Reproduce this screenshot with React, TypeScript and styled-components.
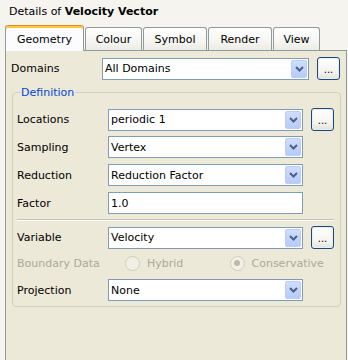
import React from "react";
import styled, { createGlobalStyle } from "styled-components";

const Global = createGlobalStyle`
  html, body { margin: 0; padding: 0; background: #f5f4ef; }
  body {
    font-family: "DejaVu Sans", Verdana, sans-serif;
    font-size: 11px;
    color: #000;
  }
`;

const Window = styled.div`
  width: 348px;
  height: 360px;
  overflow: hidden;
  display: flex;
  flex-direction: column;
  background: #f5f4ef;
`;

const Title = styled.div`
  height: 25px;
  box-sizing: border-box;
  padding: 5px 0 0 9px;
  line-height: 14px;
  white-space: nowrap;
  b { font-weight: bold; }
`;

const TabBar = styled.div`
  display: flex;
  align-items: flex-end;
  height: 25px;
  padding-left: 5px;
  gap: 1px;
`;

const Tab = styled.div<{ $active?: boolean; $w: number }>`
  box-sizing: border-box;
  width: ${(p) => p.$w}px;
  height: ${(p) => (p.$active ? 26 : 23)}px;
  display: flex;
  align-items: center;
  justify-content: center;
  border: 1px solid #919b9c;
  border-bottom: none;
  border-radius: 3px 3px 0 0;
  background: ${(p) =>
    p.$active ? "#fcfcfe" : "linear-gradient(#ffffff, #f3f3ef 70%, #ecebe5)"};
  ${(p) =>
    p.$active
      ? `border-top: 1px solid #e68b2c; box-shadow: inset 0 2px 0 #ffc73c; padding-top: 2px; position: relative; z-index: 1; margin-bottom: -1px;`
      : ``}
`;

const Panel = styled.div`
  margin-left: 5px;
  width: 342px;
  flex: 1;
  box-sizing: border-box;
  border: 1px solid #919b9c;
  border-bottom: none;
  background: #ece9d8;
  padding: 6px 0 0 5px;
  display: flex;
  flex-direction: column;
`;

const Row = styled.div<{ $field: number; $mt?: number }>`
  display: grid;
  grid-template-columns: 83px ${(p) => p.$field}px 23px;
  column-gap: 8px;
  align-items: center;
  height: 22px;
  margin-top: ${(p) => p.$mt ?? 0}px;
`;

const Label = styled.span<{ $disabled?: boolean }>`
  color: ${(p) => (p.$disabled ? "#aca899" : "#000")};
  white-space: nowrap;
`;

const Combo = styled.div`
  box-sizing: border-box;
  height: 22px;
  border: 1px solid #7f9db9;
  background: #fff;
  display: flex;
  align-items: center;
  padding-left: 2px;
  white-space: nowrap;
`;

const ComboText = styled.span`
  flex: 1;
`;

const ArrowBtn = styled.div`
  box-sizing: border-box;
  width: 16px;
  height: 18px;
  margin-right: 1px;
  border: 1px solid #bccdf6;
  border-radius: 2px;
  background: linear-gradient(#cfdcfd, #b7cbf8);
  display: flex;
  align-items: center;
  justify-content: center;
`;

const TextInput = styled.div`
  box-sizing: border-box;
  height: 22px;
  border: 1px solid #7f9db9;
  background: #fff;
  display: flex;
  align-items: center;
  padding-left: 2px;
`;

const DotsButton = styled.div`
  box-sizing: border-box;
  width: 23px;
  height: 23px;
  border: 1px solid #1c4a78;
  border-radius: 3px;
  background: linear-gradient(#ffffff, #f4f3ee 70%, #e3e1d6);
  box-shadow: inset 0 0 0 1px #e6eefc;
  display: flex;
  align-items: flex-end;
  justify-content: center;
  padding-bottom: 4px;
  font-size: 10px;
  line-height: 10px;
`;

const Group = styled.div`
  position: relative;
  margin: 13px 5px 0 1px;
  border: 1px solid #d0d0bf;
  border-radius: 4px;
  padding: 15px 6px 5px 4px;
  display: flex;
  flex-direction: column;
`;

const Legend = styled.span`
  position: absolute;
  top: -7px;
  left: 7px;
  padding: 0 1px;
  line-height: 13px;
  background: #ece9d8;
  color: #0046d5;
`;

const Separator = styled.div`
  margin: 5px 0;
  height: 0;
  border-top: 1px solid #c5c2b2;
  border-bottom: 1px solid #ffffff;
`;

const RadioGroup = styled.div`
  grid-column: 2 / 4;
  display: flex;
  padding-left: 17px;
`;

const RadioOption = styled.div`
  width: 105px;
  display: flex;
  align-items: center;
  gap: 7px;
  color: #aca899;
`;

const RadioCircle = styled.span<{ $checked?: boolean }>`
  box-sizing: border-box;
  width: 15px;
  height: 15px;
  border-radius: 50%;
  border: 1px solid #cfcdc0;
  background: #f2f0e6;
  display: flex;
  align-items: center;
  justify-content: center;
  &::after {
    content: "";
    width: 6px;
    height: 6px;
    border-radius: 50%;
    background: ${(p) => (p.$checked ? "#bdbaa9" : "transparent")};
  }
`;

const Chevron = () => (
  <svg width="9" height="6" viewBox="0 0 9 6">
    <path d="M1 1 L4.5 4.5 L8 1" fill="none" stroke="#4d6185" strokeWidth="2" />
  </svg>
);

const Select = ({ value }: { value: string }) => (
  <Combo>
    <ComboText>{value}</ComboText>
    <ArrowBtn>
      <Chevron />
    </ArrowBtn>
  </Combo>
);

const Dots = () => <DotsButton>...</DotsButton>;

export default function App() {
  return (
    <Window>
      <Global />
      <Title>
        Details of <b>Velocity Vector</b>
      </Title>
      <TabBar>
        <Tab $active $w={79}>Geometry</Tab>
        <Tab $w={57}>Colour</Tab>
        <Tab $w={64}>Symbol</Tab>
        <Tab $w={64}>Render</Tab>
        <Tab $w={47}>View</Tab>
      </TabBar>
      <Panel>
        <Row $field={207}>
          <Label>Domains</Label>
          <Select value="All Domains" />
          <Dots />
        </Row>
        <Group>
          <Legend>Definition</Legend>
          <Row $field={195}>
            <Label>Locations</Label>
            <Select value="periodic 1" />
            <Dots />
          </Row>
          <Row $field={195} $mt={6}>
            <Label>Sampling</Label>
            <Select value="Vertex" />
          </Row>
          <Row $field={195} $mt={6}>
            <Label>Reduction</Label>
            <Select value="Reduction Factor" />
          </Row>
          <Row $field={195} $mt={6}>
            <Label>Factor</Label>
            <TextInput>1.0</TextInput>
          </Row>
          <Separator />
          <Row $field={195}>
            <Label>Variable</Label>
            <Select value="Velocity" />
            <Dots />
          </Row>
          <Row $field={195} $mt={4}>
            <Label $disabled>Boundary Data</Label>
            <RadioGroup>
              <RadioOption>
                <RadioCircle />
                Hybrid
              </RadioOption>
              <RadioOption>
                <RadioCircle $checked />
                Conservative
              </RadioOption>
            </RadioGroup>
          </Row>
          <Row $field={195} $mt={5}>
            <Label>Projection</Label>
            <Select value="None" />
          </Row>
        </Group>
      </Panel>
    </Window>
  );
}
